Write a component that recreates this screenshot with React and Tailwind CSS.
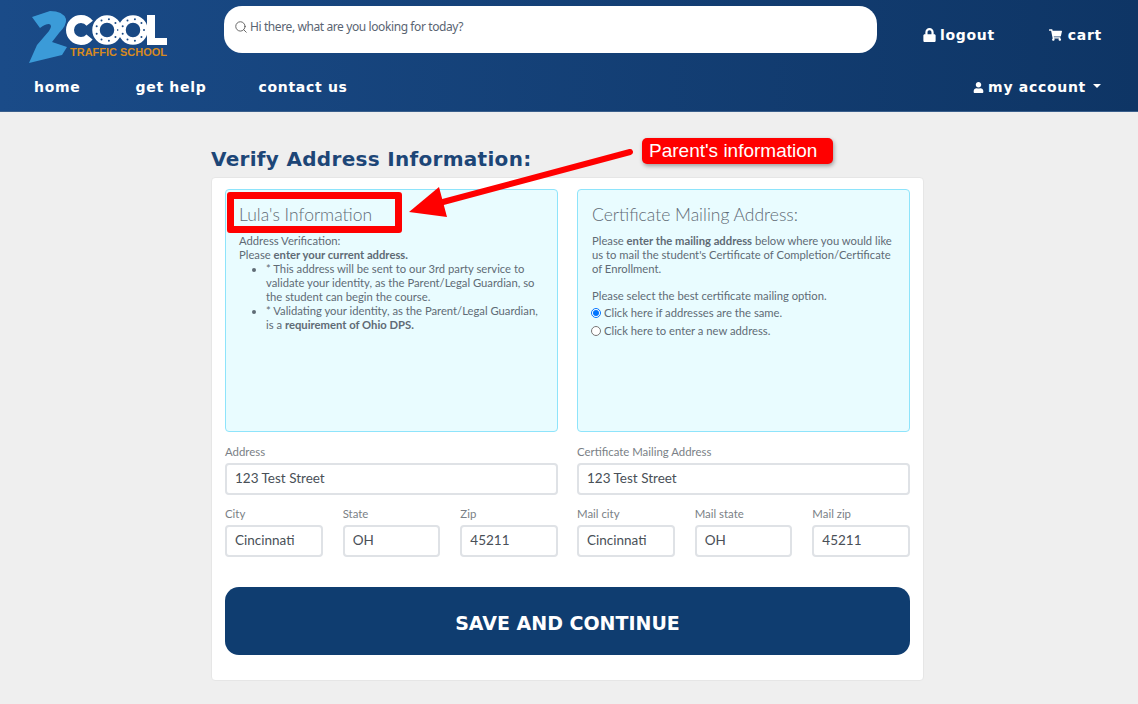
import { FaLock, FaShoppingCart, FaUser } from "react-icons/fa";
import { Search } from "lucide-react";

function Logo() {
  const dots = (cx) =>
    [0, 40, 80, 120, 160, 200, 240, 280, 320].map((a) => (
      <circle
        key={a}
        cx={cx + 11 * Math.cos((a * Math.PI) / 180)}
        cy={19 + 11 * Math.sin((a * Math.PI) / 180)}
        r="1"
        fill="#1a4a85"
      />
    ));
  return (
    <svg width="140" height="54" viewBox="0 0 140 54" className="block shrink-0">
      <path
        d="M3 6 L21 0 Q34 0 37 8 Q38 14 30 22 L23 31 L38 36 L33 44 L0 52 L8 34 L20 20 Q24 14 20 13 Q16 13 11 17 Z"
        fill="#3b9bd8"
      />
      <circle cx="52" cy="19" r="16" fill="#1a4a85" />
      <circle cx="52" cy="19" r="11" fill="none" stroke="#fff" strokeWidth="8" strokeDasharray="54 15" strokeDashoffset="-7.5" />
      <circle cx="78" cy="19" r="11" fill="none" stroke="#fff" strokeWidth="7.5" />
      {dots(78)}
      <circle cx="104" cy="19" r="11" fill="none" stroke="#fff" strokeWidth="7.5" />
      {dots(104)}
      <path d="M118 4 H126 V27 H138 V34 H118 Z" fill="#fff" />
      <text x="41" y="45" fontFamily="Liberation Sans" fontWeight="700" fontSize="11" letterSpacing="0" fill="#d68a1f" textLength="97" lengthAdjust="spacingAndGlyphs">
        TRAFFIC SCHOOL
      </text>
    </svg>
  );
}

function Field({ label, value, className }) {
  return (
    <div className={className}>
      <div className="text-[11.4px] leading-[12px] text-[#7a7f86] -mt-[1px] mb-[5px]">{label}</div>
      <div className="h-8 border-2 border-[#dfe2e6] rounded-[4px] bg-white px-[8px] pb-[1px] flex items-center text-[13.5px] text-[#495057]">
        {value}
      </div>
    </div>
  );
}

function AddressColumn({ addressLabel, address, cityLabel, stateLabel, zipLabel }) {
  return (
    <div className="w-[333px] pt-[15px]">
      <Field label={addressLabel} value={address} />
      <div className="grid grid-cols-3 gap-5 mt-[14px]">
        <Field label={cityLabel} value="Cincinnati" />
        <Field label={stateLabel} value="OH" />
        <Field label={zipLabel} value="45211" />
      </div>
    </div>
  );
}

export default function App() {
  return (
    <div className="relative min-h-[704px] bg-[#efefef] font-['Lato',sans-serif] overflow-hidden">
      <header className="h-[112px] bg-gradient-to-r from-[#1a4b88] to-[#0e3565] text-white font-['DejaVu_Sans',sans-serif] font-bold text-[14px] tracking-[0.7px] border-b border-[#3a5f8c]">
        <div className="flex items-start h-[60px] pt-[6px] pl-[29px] pr-[36px]">
          <div className="mt-[5px]">
            <Logo />
          </div>
          <div className="ml-[55px] w-[653px] h-[47px] bg-white rounded-[18px] flex items-center pl-[10px] pb-[5px] text-[#5a6472] font-['Noto_Sans',sans-serif] font-normal text-[12px] tracking-[-0.4px]">
            <Search className="w-[14px] h-[14px] mr-[2px] text-[#555]" strokeWidth={1.5} />
            Hi there, what are you looking for today?
          </div>
          <div className="ml-auto mt-[20px] h-[18px] flex items-center">
            <FaLock className="w-[13px] h-[14px] mr-1" />
            logout
          </div>
          <div className="ml-[54px] mt-[20px] h-[18px] flex items-center">
            <FaShoppingCart className="w-[13px] h-[12px] mr-[6px]" />
            cart
          </div>
        </div>
        <div className="flex items-center h-[34px] mt-[10px] pl-[34px] pr-[37px]">
          <span>home</span>
          <span className="ml-[55px]">get help</span>
          <span className="ml-[52px]">contact us</span>
          <div className="ml-auto flex items-center">
            <FaUser className="w-[11px] h-[11px] mr-1" />
            my account
            <span className="ml-[7px] mb-[3px] border-x-[4px] border-x-transparent border-t-[4px] border-t-white" />
          </div>
        </div>
      </header>

      <main className="w-[713px] ml-[211px]">
        <h1 className="mt-[35px] h-[30px] font-['DejaVu_Sans',sans-serif] font-bold text-[20px] tracking-[0.3px] leading-[24px] text-[#1d4677]">
          Verify Address Information:
        </h1>
        <div className="bg-white border border-[#e6e6e6] rounded-[4px] px-[13px] pt-[11px] h-[504px]">
          <div className="flex justify-between">
            <div>
              <section className="w-[333px] h-[243px] border border-[#8ee4fb] bg-[#e9fcff] rounded-[4px] px-[13px] pt-[15px] text-[11.25px] leading-[14px] text-[#5f6b75]">
                <h2 className="text-[17.5px] font-light leading-[20px] text-[#5f6b75] mb-[9px]">Lula's Information</h2>
                <p>Address Verification:</p>
                <p>
                  Please <span className="font-bold">enter your current address.</span>
                </p>
                <ul className="list-disc pl-[27px] pr-[6px]">
                  <li>* This address will be sent to our 3rd party service to validate your identity, as the Parent/Legal Guardian, so the student can begin the course.</li>
                  <li>
                    * Validating your identity, as the Parent/Legal Guardian, is a <span className="font-bold">requirement of Ohio DPS.</span>
                  </li>
                </ul>
              </section>
              <AddressColumn addressLabel="Address" address="123 Test Street" cityLabel="City" stateLabel="State" zipLabel="Zip" />
            </div>
            <div>
              <section className="w-[333px] h-[243px] border border-[#8ee4fb] bg-[#e9fcff] rounded-[4px] px-[14px] pt-[15px] text-[11.25px] leading-[14px] text-[#5f6b75]">
                <h2 className="text-[17.5px] font-light leading-[20px] text-[#5f6b75] mb-[9px]">Certificate Mailing Address:</h2>
                <p>
                  Please <span className="font-bold">enter the mailing address</span> below where you would like us to mail the student's Certificate of Completion/Certificate of Enrollment.
                </p>
                <p className="mt-[13px]">Please select the best certificate mailing option.</p>
                <label className="flex items-center h-[18px] mt-[1px] -ml-[1px]">
                  <input type="radio" name="mail" defaultChecked className="w-[10px] h-[10px] mr-[3px] m-0" />
                  Click here if addresses are the same.
                </label>
                <label className="flex items-center h-[18px] -ml-[1px]">
                  <input type="radio" name="mail" className="w-[10px] h-[10px] mr-[3px] m-0" />
                  Click here to enter a new address.
                </label>
              </section>
              <AddressColumn addressLabel="Certificate Mailing Address" address="123 Test Street" cityLabel="Mail city" stateLabel="Mail state" zipLabel="Mail zip" />
            </div>
          </div>
          <button className="mt-[30px] w-full h-[68px] rounded-[14px] bg-[#0f3d70] text-white font-['DejaVu_Sans',sans-serif] font-bold text-[19px] pt-[5px]">
            SAVE AND CONTINUE
          </button>
        </div>
      </main>

      {/* annotations */}
      <div className="absolute left-[227px] top-[192px] w-[175px] h-[41px] border-[7px] border-[#f00] rounded-[3px]" />
      <svg className="absolute left-[400px] top-[140px]" width="240" height="90" viewBox="0 0 240 90">
        <path d="M230 12 L43 62" stroke="#f00" strokeWidth="6" strokeLinecap="round" />
        <path d="M9 72 L39 47 L47 77 Z" fill="#f00" />
      </svg>
      <div className="absolute left-[642px] top-[138px] w-[191px] h-[26px] bg-[#f00] rounded-[5px] shadow-[1px_2px_4px_rgba(0,0,0,0.35)] pl-[7px] text-white text-[19px] leading-[26px] font-['Liberation_Sans',sans-serif]">
        Parent's information
      </div>
    </div>
  );
}
